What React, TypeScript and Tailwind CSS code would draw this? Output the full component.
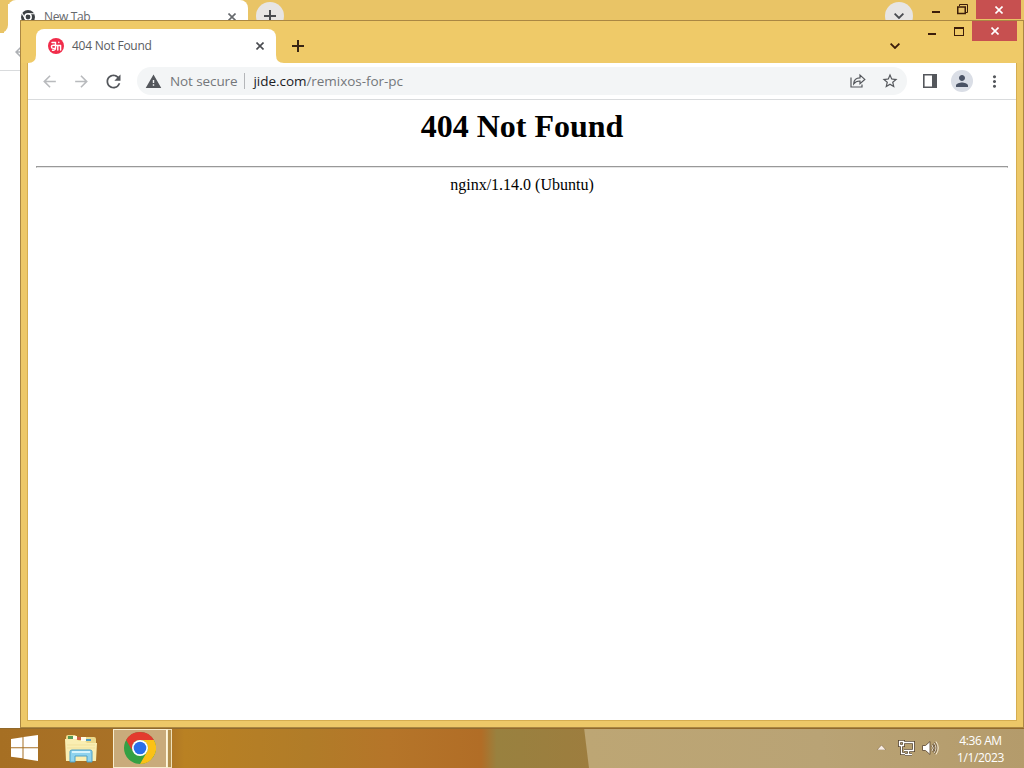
import React from 'react';
import { MdRefresh, MdArrowBack, MdArrowForward, MdMoreVert, MdPerson, MdStarBorder, MdWarning } from 'react-icons/md';

const Close: React.FC = () => (
  <svg width="8" height="8" viewBox="0 0 8 8" fill="none" stroke="currentColor" strokeWidth="1.600">
    <path d="M.5.5l7 7M7.5.5l-7 7" />
  </svg>
);

const Plus: React.FC = () => (
  <svg width="12" height="12" viewBox="0 0 12 12" stroke="currentColor" strokeWidth="2">
    <path d="M6 0v12M0 6h12" />
  </svg>
);

const Chevron: React.FC = () => (
  <svg width="10" height="6" viewBox="0 0 10 6" fill="none" stroke="currentColor" strokeWidth="1.8">
    <path d="M.6.6L5 5 9.400.6" />
  </svg>
);

const SiteIcon: React.FC = () => (
  <svg width="16" height="16" viewBox="0 0 16 16" fill="none" stroke="white" strokeWidth="1.400" strokeLinecap="round">
    <circle cx="8" cy="8" r="8" fill="#f12d4b" stroke="none" />
    <path d="M4 4.500h3.500v5.500q0 2.500-3 2.200M7.300 7.200H5.200c-2.400 0-2.400 3.200 0 3.200h2M9.800 7.500v4.500M12.600 7.500v4.500M7.500 7.500h5.100M10.800 4.300v.2" />
  </svg>
);

const ChromeLogo: React.FC = () => (
  <svg width="32" height="32" viewBox="0 0 32 32">
    <circle cx="16" cy="16" r="16" fill="#34a044" />
    <path d="M2.140 8A16 16 0 0 1 29.860 8H16a8 8 0 0 0-6.930 12z" fill="#e33b2e" />
    <path d="M29.860 8A16 16 0 0 1 16 32l6.930-12A8 8 0 0 0 16 8z" fill="#fbc116" />
    <circle cx="16" cy="16" r="8" fill="white" />
    <circle cx="16" cy="16" r="6.300" fill="#2a6fe8" />
  </svg>
);

const ChromeMono: React.FC = () => (
  <svg width="14" height="14" viewBox="0 0 14 14">
    <circle cx="7" cy="7" r="7" fill="#3c4043" />
    <circle cx="7" cy="7" r="3.200" fill="#3c4043" stroke="white" strokeWidth="1.500" />
    <path d="M7 3.800h6.500M4.200 8.600L1 3.200M9.800 8.600L6.700 14" stroke="white" strokeWidth="1.100" />
  </svg>
);

const Folder: React.FC = () => (
  <svg width="32" height="30" viewBox="0 0 32 30">
    <path d="M1 3q0-2 2-2h7l2 2h17q2 0 2 2v21H1z" fill="#ecd98b" />
    <path d="M3 2h5v3H3z" fill="#569a54" />
    <path d="M12 3h4v3h-4z" fill="#cf6143" />
    <path d="M21 5h5v2h-5z" fill="#4b9ac1" />
    <path d="M8 2h4v3H8zM16 3h5v4h-5z" fill="#fffbe8" />
    <path d="M0 5h11l3 2h6l2 2h10l-1 18H1z" fill="#faeeb2" />
    <path d="M2 11h28M2 14h28" stroke="#f1e19c" />
    <path d="M5 17.500q0-1.500 2-1.500h18q2 0 2 1.500V28h-5v-6H10v6H5z" fill="#8fd3ee" stroke="#4c9fc4" />
    <path d="M7 18h18" stroke="#d7f4fc" strokeWidth="2" />
  </svg>
);

const BackWindow: React.FC = () => (
  <div className="absolute inset-x-0 top-0 h-[728px] overflow-hidden bg-white">
    <div className="relative flex h-[33px] bg-[#e9c466]">
      <div className="w-2 rounded-br-lg bg-[#e9c466] shadow-[4px_4px_0_white]" />
      <div className="flex h-[33px] w-60 items-center rounded-t-lg bg-white pl-[13px] pr-3 text-[#66696d]">
        <ChromeMono />
        <span className="ml-[9px] flex-1 text-[12px] tracking-[-0.35px]">New Tab</span>
        <Close />
      </div>
      <div className="ml-2 mt-[2px] flex h-7 w-7 items-center justify-center rounded-full bg-[#e7e5e4] text-[#494b50]">
        <Plus />
      </div>
      <div className="ml-auto mr-[21px] mt-[2px] flex h-7 w-7 items-center justify-center rounded-full bg-[#e7e5e4] text-[#494b50]">
        <Chevron />
      </div>
      <div className="flex h-5 w-[90px] text-[#3c1d0a]">
        <div className="-ml-[2px] mt-[11px] h-[2px] w-2 bg-[#3c1d0a]" />
        <svg className="ml-[17px] mt-1" width="11" height="11" viewBox="0 0 11 11" fill="none" stroke="currentColor">
          <path d="M2.500 2V.5h8v8H9" />
          <path d="M.75 3h7.500v6.500H.75z" strokeWidth="1.500" />
        </svg>
      </div>
      <div className="absolute right-[3px] top-0 flex h-[19px] w-[45px] items-center justify-center bg-[#c75050] text-white">
        <Close />
      </div>
    </div>
    <div className="flex h-[38px] items-center border-b border-[#d9dbdd] pl-3 text-[#aeb1b5]">
      <MdArrowBack size={18} />
    </div>
  </div>
);

const TabStrip: React.FC = () => (
  <div className="flex h-[42px] justify-between bg-[#efca68] pl-[7px]">
    <div className="flex pt-2">
      <div className="flex items-end">
        <svg width="8" height="8" viewBox="0 0 8 8"><path d="M8 0v8H0q8 0 8-8" fill="white" /></svg>
      </div>
      <div className="flex w-60 items-center rounded-t-lg bg-white pl-3 pr-3 text-[#494b50]">
        <SiteIcon />
        <span className="ml-2 flex-1 text-[12px] tracking-[-0.24px] text-[#5a5c60]">404 Not Found</span>
        <Close />
      </div>
      <div className="flex items-end">
        <svg width="8" height="8" viewBox="0 0 8 8"><path d="M0 0v8h8q-8 0-8-8" fill="white" /></svg>
      </div>
      <div className="ml-2 mt-[11px] text-[#382514]">
        <Plus />
      </div>
    </div>
    <div className="flex text-[#3c1d0a]">
      <div className="mt-[22px]"><Chevron /></div>
      <div className="ml-7 mt-3 h-[2px] w-2 bg-[#3c1d0a]" />
      <div className="ml-[18px] mt-[6px] h-[9px] w-[10px] border border-t-2 border-[#3c1d0a]" />
      <div className="ml-2 mr-[6px] flex h-5 w-[45px] items-center justify-center bg-[#c75050] text-white">
        <Close />
      </div>
    </div>
  </div>
);

const Toolbar: React.FC = () => (
  <div className="flex h-[37px] shrink-0 items-center border-b border-[#d9dbdd] bg-white pl-3 text-[#54575c]">
    <MdArrowBack size={19} color="#b8babd" />
    <MdArrowForward size={19} color="#b8babd" className="ml-[13px]" />
    <MdRefresh size={21} className="ml-3" />
    <div className="ml-[13px] flex h-7 w-[770px] items-center rounded-full bg-[#f3f5f6] pl-2 pr-2">
      <MdWarning size={17} />
      <span className="ml-2 text-[13.500px] tracking-[-0.1px] text-[#74777b]">Not secure</span>
      <span className="ml-[7px] h-4 w-px bg-[#b4b6b9]" />
      <span className="ml-2 text-[13.500px] tracking-[-0.04px] text-[#74777b]">
        <span className="text-[#202124]">jide.com</span>/remixos-for-pc
      </span>
      <svg className="ml-auto" width="16" height="16" viewBox="0 0 16 16" fill="none" stroke="currentColor" strokeWidth="1.200">
        <path d="M1 4.500v9.500h11v-2.500M3.700 10.800q.3-6 6.300-6V2l4.800 4.400-4.800 4.200V8Q6 7.800 3.700 10.800z" />
      </svg>
      <MdStarBorder size={18} className="ml-[15px]" />
    </div>
    <svg className="ml-4" width="14" height="14" viewBox="0 0 14 14">
      <path d="M.8.8h12.400v12.400H.8z" fill="none" stroke="currentColor" strokeWidth="1.600" />
      <path d="M9 0h5v14H9z" fill="currentColor" />
    </svg>
    <div className="ml-[14px] flex h-[22px] w-[22px] items-center justify-center rounded-full bg-[#dadee6]">
      <MdPerson size={18} color="#4a5365" />
    </div>
    <MdMoreVert size={19} className="ml-3" />
  </div>
);

const FrontWindow: React.FC = () => (
  <div className="absolute left-5 top-5 flex h-[708px] w-[1004px] flex-col border border-[#aa8743] bg-[#edc868]">
    <TabStrip />
    <div className="ml-[7px] mr-[7px] flex h-[657px] flex-col bg-white outline outline-1 outline-[#d5ad50] [clip-path:inset(0_-1px_-1px_-1px)]">
      <Toolbar />
      <main className="px-2 pt-[8px] text-center font-['Liberation_Serif',serif] text-black">
        <h1 className="text-[32px] font-bold leading-[37px]">404 Not Found</h1>
        <hr className="mt-[21px] h-[2px] border border-[#999] border-b-[#e5e5e5]" />
        <p className="mt-2 text-[16px] leading-[18px]">nginx/1.14.0 (Ubuntu)</p>
      </main>
    </div>
  </div>
);

const Taskbar: React.FC = () => (
  <footer className="absolute inset-x-0 bottom-0 flex h-10 items-center border-t border-[#91692c] bg-[linear-gradient(83deg,transparent_57.200%,#bda674_57.300%,#b9a375_80%,#b49b6b_100%),linear-gradient(90deg,#a66f23_0%,#aa7228_16%,#b98123_18%,#b17c28_30%,#b57529_38%,#b16d26_47%,#99813f_48.500%,#9e7c3e_60%)]">
    <svg className="mb-[2px] ml-[11px]" width="28" height="26" viewBox="0 0 28 26" fill="white">
      <path d="M0 4l11.500-1.700v10H0zM12.500 2.100L27 0v12.300H12.500zM0 13.300h11.500v10L0 21.700zM12.500 13.300H27V26l-14.500-2.200z" />
    </svg>
    <div className="ml-[26px]"><Folder /></div>
    <div className="ml-4 flex h-[39px] w-[55px] items-center border border-[#f7edcf] bg-[#c9ab7b] pl-[10px]">
      <div className="mb-[2px]"><ChromeLogo /></div>
      <span className="ml-auto h-full w-px bg-[#fff8df]" />
    </div>
    <span className="h-[39px] w-[4px] border-y border-r border-[#efe1bb] bg-[#b3904e]" />
    <div className="mb-[2px] ml-auto flex items-center text-white">
      <svg width="9" height="5" viewBox="0 0 9 5"><path d="M4.500 0L9 5H0z" fill="#f9eee6" stroke="#786341" strokeWidth=".5" /></svg>
      <svg className="ml-3" width="17" height="16" viewBox="0 0 17 16" fill="none">
        <path d="M5 2.500h10.500v8H6M10.500 11v3M7 14.500h7M1.500 1.500h4v4h-4zM3.500 6v7.500H7" stroke="#57462f" strokeWidth="3" />
        <path d="M5 2.500h10.500v8H6M10.500 11v3M7 14.500h7M1.500 1.500h4v4h-4zM3.500 6v7.500H7" stroke="white" strokeWidth="1.300" />
      </svg>
      <svg className="ml-[7px]" width="17" height="16" viewBox="0 0 17 16" fill="none" stroke="#64513a">
        <path d="M.5 5.500h3L8 1.500v13l-4.500-4h-3z" fill="white" strokeWidth=".9" />
        <path d="M10 5q2.500 3 0 6M12 3q4 5 0 10" strokeWidth="2.200" />
        <path d="M10 5q2.500 3 0 6M12 3q4 5 0 10M14 1.500q4.500 6.500 0 13" stroke="#f5ead5" />
      </svg>
      <div className="ml-[15px] mr-[17px] mt-[2px] w-[53px] whitespace-nowrap text-center text-[12px] leading-[17px] tracking-[-0.4px]">
        <div>4:36 AM</div>
        <div>1/1/2023</div>
      </div>
    </div>
  </footer>
);

export default function App() {
  return (
    <div className="relative h-[768px] w-[1024px] overflow-hidden bg-white font-['Open_Sans','Noto_Sans',sans-serif]">
      <BackWindow />
      <FrontWindow />
      <Taskbar />
    </div>
  );
}
